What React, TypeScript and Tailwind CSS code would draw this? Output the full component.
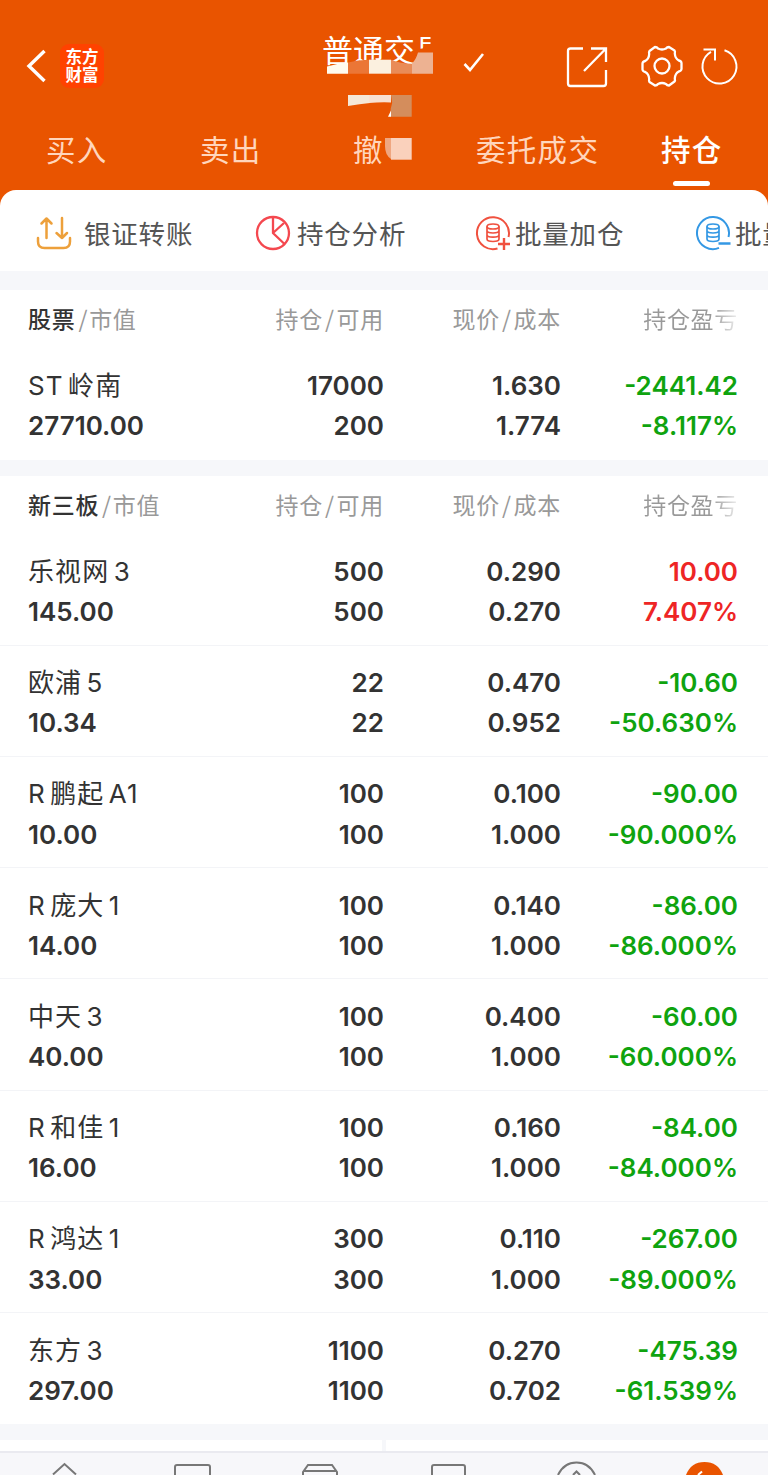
import clsx from 'clsx';

interface Holding {
  name: string;
  value: string;
  amount: string;
  available: string;
  price: string;
  cost: string;
  profit: string;
  rate: string;
}

const stocks: Holding[] = [
  { name: 'ST 岭南', value: '27710.00', amount: '17000', available: '200', price: '1.630', cost: '1.774', profit: '-2441.42', rate: '-8.117%' },
];

const neeq: Holding[] = [
  { name: '乐视网 3', value: '145.00', amount: '500', available: '500', price: '0.290', cost: '0.270', profit: '10.00', rate: '7.407%' },
  { name: '欧浦 5', value: '10.34', amount: '22', available: '22', price: '0.470', cost: '0.952', profit: '-10.60', rate: '-50.630%' },
  { name: 'R 鹏起 A1', value: '10.00', amount: '100', available: '100', price: '0.100', cost: '1.000', profit: '-90.00', rate: '-90.000%' },
  { name: 'R 庞大 1', value: '14.00', amount: '100', available: '100', price: '0.140', cost: '1.000', profit: '-86.00', rate: '-86.000%' },
  { name: '中天 3', value: '40.00', amount: '100', available: '100', price: '0.400', cost: '1.000', profit: '-60.00', rate: '-60.000%' },
  { name: 'R 和佳 1', value: '16.00', amount: '100', available: '100', price: '0.160', cost: '1.000', profit: '-84.00', rate: '-84.000%' },
  { name: 'R 鸿达 1', value: '33.00', amount: '300', available: '300', price: '0.110', cost: '1.000', profit: '-267.00', rate: '-89.000%' },
  { name: '东方 3', value: '297.00', amount: '1100', available: '1100', price: '0.270', cost: '0.702', profit: '-475.39', rate: '-61.539%' },
];

const columns = 'grid grid-cols-[176px_180px_177px_177px] pl-7';

function Header() {
  return (
    <header className="relative h-[190px] bg-[#e95400] text-white">
      <div className="flex h-[130px] items-start">
        <svg className="ml-[26px] mt-[49px] h-[34px] w-5" viewBox="0 0 20 34" fill="none" stroke="currentColor" strokeWidth="3.4">
          <path d="M18.500 2 3 17l15.500 15" />
        </svg>
        <div className="ml-[14px] mt-11 flex h-11 w-11 flex-col items-center justify-center rounded-[9px] bg-[#ff4200] pb-[2px] font-['Noto_Sans_CJK_SC',sans-serif] text-[16.500px] font-bold leading-[18px]">
          <span>东方</span>
          <span>财富</span>
        </div>
        <h1 className="ml-[218px] mt-[29px] w-[125px] whitespace-nowrap text-[31px] leading-[40px]">普通交易</h1>
        <svg className="ml-[16px] mt-[51px] h-[22px] w-[22px]" viewBox="0 0 22 22" fill="none" stroke="currentColor" strokeWidth="2.600">
          <path d="M1.500 13 7 19 20 3" />
        </svg>
        <svg className="ml-[81px] mt-[46px] h-[42px] w-[42px]" viewBox="0 0 42 42" fill="none" stroke="currentColor" strokeWidth="2.300">
          <path d="M17 2.500H4.500a2.500 2.500 0 0 0-2.500 2.500v32.500a2.500 2.500 0 0 0 2.500 2.500h33a2.500 2.500 0 0 0 2.500-2.500V24M25 2.500h15V16M39.500 3 18 25" />
        </svg>
        <svg className="ml-[33px] mt-[45px] h-[42px] w-[42px]" viewBox="0 0 42 42" fill="none" stroke="currentColor" strokeWidth="2.300" strokeLinejoin="round">
          <path d="M14 2q2 0 3 1.500q4 2 8 0q1-1.500 3-1.500l5.500 3.500q.8 1 .3 3q.3 5 4 7q2.500.5 2.700 2.500v6q-.2 2-2.700 2.500q-3.700 2-4 7q.5 2-.3 3L28 40.500q-2 0-3-1.500q-4-2-8 0q-1 1.500-3 1.500L8.500 37q-.8-1-.3-3q-.3-5-4-7q-2.500-.5-2.700-2.500v-6q.2-2 2.700-2.500q3.700-2 4-7q-.5-2 .3-3z" />
          <circle cx="21" cy="21" r="7.500" />
        </svg>
        <svg className="ml-[17px] mt-[46px] h-10 w-10" viewBox="0 0 40 40" fill="none" stroke="currentColor" strokeWidth="2">
          <path d="M24.500 4.300A17 17 0 1 1 11 5.800M3.500 3.500h11.500V14.500" />
        </svg>
      </div>

      <nav className="flex text-[29.500px] leading-9 tracking-[1.300px] text-[#ffd6bd]">
        <span className="ml-[46px] w-[154px]">买入</span>
        <span className="w-[153px]">卖出</span>
        <span className="w-[123px]">撤</span>
        <span className="w-[185px]">委托成交</span>
        <span className="font-medium text-white">持仓</span>
      </nav>
      <div className="ml-[673px] mt-[15px] h-[5px] w-[37px] rounded-full bg-white" />

      {/* mosaic over the account name and number */}
      <svg className="absolute left-[320px] top-[30px] h-[132px] w-[130px]" viewBox="320 30 130 132">
        <path d="M418 49 422.500 48.500 425 45.500 430.500 44V30H450V76H414V64z" fill="#e95400" />
        <path d="M327 66.500q10-3 21-4v11.200h-21z" fill="#fffbef" />
        <path d="M348 62.500q10-2.500 21-2.800v14h-21z" fill="#eb7636" />
        <path d="M369 59.700h22v14h-22z" fill="#fbf0df" />
        <path d="M391 59.700q10 4 21 4v10h-21z" fill="#e98b57" />
        <path d="M412 63.500q4-4 6-11h15v21.200h-21z" fill="#edb292" />
        <path d="M348 95h22v8q-10 1-22 3z" fill="#f5e8d7" />
        <path d="M369 95h22v7.500q-11-.5-22 .6z" fill="#f8e1d1" />
        <path d="M391 95h20.700v21.700h-21v-8l1.500-6z" fill="#d48d5c" />
        <path d="M391 110.500 388 116.700h3z" fill="#fff" />
        <path d="M385 138h6v21q-6-4-6-13z" fill="#efa680" />
        <path d="M391 138h20.700v21.700H391z" fill="#fad1bc" />
      </svg>
    </header>
  );
}

function TransferIcon() {
  return (
    <svg className="h-[34px] w-9" viewBox="0 0 36 34" fill="none" stroke="#eda03b" strokeWidth="2.500" strokeLinecap="round" strokeLinejoin="round">
      <path d="M2 22v3.500q0 6.500 6.500 6.500h19q6.500 0 6.500-6.500V22M10.500 22V2.500M5.500 7.500l5-5 5 5M26 2v20M20.500 17l5.500 5 5-5" />
    </svg>
  );
}

function PieIcon() {
  return (
    <svg className="h-9 w-9" viewBox="0 0 36 36" fill="none" stroke="#f4484f" strokeWidth="2.300">
      <circle cx="18" cy="18" r="16" />
      <path d="M18 2v16l11.500 11M18 18 29 8" />
    </svg>
  );
}

function CoinsIcon({ minus = false }: { minus?: boolean }) {
  return (
    <svg className={clsx('h-9 w-9', minus ? 'text-[#3498e4]' : 'text-[#f0513f]')} viewBox="0 0 36 36" fill="none" stroke="currentColor" strokeWidth="2">
      <path d={minus ? 'M33.500 22A16 16 0 1 0 24 32.900' : 'M33.500 22A16 16 0 1 0 22.500 33.500'} />
      <g strokeWidth="1.700">
        <ellipse cx="18" cy="11.500" rx="6" ry="2.500" />
        <path d="M12 11.500v12.500c0 3.300 12 3.300 12 0v-12.500M12 15.500c0 3.300 12 3.300 12 0M12 19.700c0 3.300 12 3.300 12 0" />
      </g>
      <path d={minus ? 'M23.500 28.500h12' : 'M23 29h12M29 23v12'} strokeWidth="2.400" />
    </svg>
  );
}

function Toolbar() {
  return (
    <div className="bg-[#e95400]">
      <div className="flex h-[81px] items-center overflow-hidden whitespace-nowrap rounded-t-[16px] bg-white pb-[2px] pt-[7px] text-[26.500px] tracking-[0.800px] text-[#555]">
        <div className="flex w-[220px] shrink-0 items-center gap-3 pl-9">
          <TransferIcon />
          <span>银证转账</span>
        </div>
        <div className="flex w-[220px] shrink-0 items-center gap-[6px] pl-[35px]">
          <PieIcon />
          <span>持仓分析</span>
        </div>
        <div className="flex w-[220px] shrink-0 items-center gap-[4px] pl-[35px]">
          <CoinsIcon />
          <span>批量加仓</span>
        </div>
        <div className="flex w-[220px] shrink-0 items-center gap-[4px] pl-[35px]">
          <CoinsIcon minus />
          <span>批量减仓</span>
        </div>
      </div>
    </div>
  );
}

function Row({ item }: { item: Holding }) {
  const up = !item.profit.startsWith('-');
  return (
    <div
      className={clsx(
        columns,
        "h-[111.250px] border-b border-[#f3f4f7] pt-[17.500px] font-['Inter','Noto_Sans_CJK_SC',sans-serif] text-[26px] font-semibold leading-[40.400px] text-[#333] last:border-0"
      )}
    >
      <div className="whitespace-nowrap">
        <div className="font-normal tracking-[1.100px] [word-spacing:-4px]">{item.name}</div>
        <div>{item.value}</div>
      </div>
      <div className="text-right">
        <div>{item.amount}</div>
        <div>{item.available}</div>
      </div>
      <div className="text-right">
        <div>{item.price}</div>
        <div>{item.cost}</div>
      </div>
      <div className={clsx('text-right', up ? 'text-[#ee2525]' : 'text-[#0fa30f]')}>
        <div>{item.profit}</div>
        <div>{item.rate}</div>
      </div>
    </div>
  );
}

function Section({ title, items }: { title: string; items: Holding[] }) {
  return (
    <section>
      <div className={clsx(columns, 'h-[58.500px] text-[23px] leading-[57px] tracking-[0.700px] text-[#999]')}>
        <div className="whitespace-nowrap">
          <span className="font-medium text-[#333]">{title}</span>
          <span className="ml-[3px] mr-px">/</span>市值
        </div>
        <div className="text-right">
          持仓<span className="mx-[2px]">/</span>可用
        </div>
        <div className="text-right">
          现价<span className="mx-[2px]">/</span>成本
        </div>
        <div className="bg-[linear-gradient(to_right,#999_85%,#eee_100%)] bg-clip-text text-right text-transparent">持仓盈亏</div>
      </div>
      {items.map((item) => (
        <Row key={item.name} item={item} />
      ))}
    </section>
  );
}

function TabBar() {
  return (
    <footer className="h-6 border-t-2 border-[#eaeaf0] bg-[#f7f7fa]">
      <svg className="block h-[22px] w-full" viewBox="0 0 768 22" fill="none" stroke="#777" strokeWidth="2">
        <path d="M53 21.500 64.500 11 76 21.500" />
        <path d="M175 22V14q0-2 2-2h31q2 0 2 2V22" />
        <path d="M303 22v-3l5-7h24l5 7v3M304 18h32" />
        <path d="M432 22V14q0-2 2-2h29q2 0 2 2V22" />
        <path d="M558 22q6-12.500 18.500-12.500T595 22M573 22l3.500-3.500L580 22" />
        <path d="M686 22q5-13 18.500-13T723 22z" fill="#e95400" stroke="none" />
        <path d="m698 22 4-3.500" stroke="#fff" />
      </svg>
    </footer>
  );
}

export default function App() {
  return (
    <div className="h-[1476px] w-[768px] overflow-hidden bg-white font-['Noto_Sans_CJK_SC',sans-serif]">
      <Header />
      <Toolbar />
      <div className="h-[19px] bg-[#f6f7fa]" />
      <Section title="股票" items={stocks} />
      <div className="h-4 bg-[#f6f7fa]" />
      <Section title="新三板" items={neeq} />
      <div className="h-4 bg-[#f6f7fa]" />
      <div className="flex h-[11px] justify-center">
        <div className="w-1 bg-[#f6f7fa]" />
      </div>
      <TabBar />
    </div>
  );
}
